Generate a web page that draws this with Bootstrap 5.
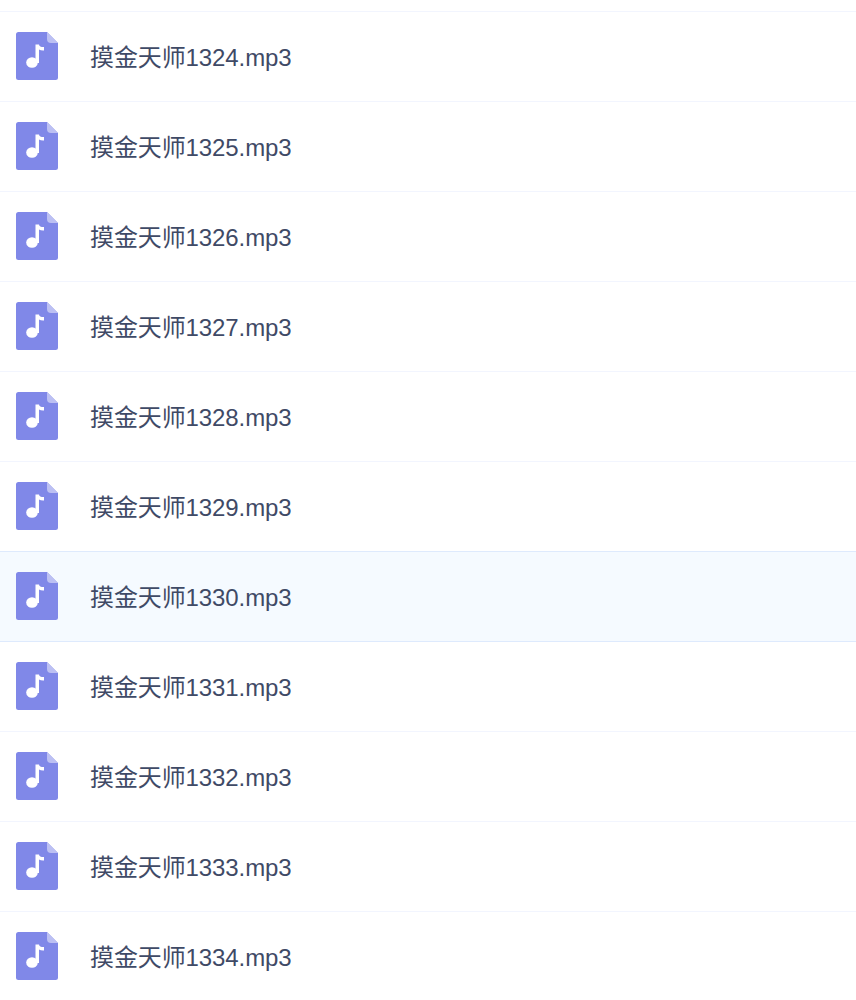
<!DOCTYPE html>
<html lang="zh">
<head>
    <meta charset="UTF-8">
    <meta name="viewport" content="width=device-width, initial-scale=1.0">
    <title>音频列表</title>
    <link href="https://cdn.jsdelivr.net/npm/bootstrap@5.3.0/dist/css/bootstrap.min.css" rel="stylesheet">
    <style>
        body {
            background-color: #fff;
            height: 1000px;
            overflow: hidden;
            padding-top: 11px;
        }
        .list-group-flush > .file-row.file-row {
            height: 90px;
            border-width: 1px 0 0;
            border-style: solid;
            border-color: #f2f5fe;
            padding: 0 0 0 16px;
            gap: 32px;
            border-radius: 0;
        }
        .list-group-flush > .file-row.active-row {
            background-color: #f5faff;
            border-top-color: #deeafd;
        }
        .list-group-flush > .active-row + .file-row.file-row {
            border-top-color: #deeafd;
        }
        .file-icon {
            width: 42px;
            height: 48px;
            flex: none;
            margin-top: -1px;
        }
        .file-name {
            font-family: "Liberation Sans", "Noto Sans CJK SC", sans-serif;
            font-size: 24px;
            color: #3f4a66;
            line-height: 1;
            letter-spacing: -0.1px;
            margin-top: 3px;
        }
    </style>
</head>
<body>
    <svg width="0" height="0" class="position-absolute">
        <symbol id="musicFile" viewBox="0 0 42 48">
            <path d="M2.500 0H31L42 11V45.500a2.500 2.500 0 0 1-2.500 2.500H2.500a2.500 2.500 0 0 1-2.500-2.500V2.500a2.500 2.500 0 0 1 2.500-2.500Z" fill="#8088e8"/>
            <path d="M31 0L42 11H35a4 4 0 0 1-4-4Z" fill="#bcc0f3"/>
            <ellipse cx="16" cy="30.500" rx="5.800" ry="5.300" fill="#fff"/>
            <path d="M19.500 12.500h3.500c.3 1.800 2 2.700 5 2.600v3.400c-2 .2-3.700-.2-5-1V31h-3.500Z" fill="#fff"/>
        </symbol>
    </svg>

    <div class="list-group list-group-flush">
        <div class="list-group-item file-row d-flex align-items-center"><svg class="file-icon"><use href="#musicFile"/></svg><span class="file-name">摸金天师1324.mp3</span></div>
        <div class="list-group-item file-row d-flex align-items-center"><svg class="file-icon"><use href="#musicFile"/></svg><span class="file-name">摸金天师1325.mp3</span></div>
        <div class="list-group-item file-row d-flex align-items-center"><svg class="file-icon"><use href="#musicFile"/></svg><span class="file-name">摸金天师1326.mp3</span></div>
        <div class="list-group-item file-row d-flex align-items-center"><svg class="file-icon"><use href="#musicFile"/></svg><span class="file-name">摸金天师1327.mp3</span></div>
        <div class="list-group-item file-row d-flex align-items-center"><svg class="file-icon"><use href="#musicFile"/></svg><span class="file-name">摸金天师1328.mp3</span></div>
        <div class="list-group-item file-row d-flex align-items-center"><svg class="file-icon"><use href="#musicFile"/></svg><span class="file-name">摸金天师1329.mp3</span></div>
        <div class="list-group-item file-row active-row d-flex align-items-center"><svg class="file-icon"><use href="#musicFile"/></svg><span class="file-name">摸金天师1330.mp3</span></div>
        <div class="list-group-item file-row d-flex align-items-center"><svg class="file-icon"><use href="#musicFile"/></svg><span class="file-name">摸金天师1331.mp3</span></div>
        <div class="list-group-item file-row d-flex align-items-center"><svg class="file-icon"><use href="#musicFile"/></svg><span class="file-name">摸金天师1332.mp3</span></div>
        <div class="list-group-item file-row d-flex align-items-center"><svg class="file-icon"><use href="#musicFile"/></svg><span class="file-name">摸金天师1333.mp3</span></div>
        <div class="list-group-item file-row d-flex align-items-center"><svg class="file-icon"><use href="#musicFile"/></svg><span class="file-name">摸金天师1334.mp3</span></div>
    </div>

    <script src="https://cdn.jsdelivr.net/npm/bootstrap@5.3.0/dist/js/bootstrap.bundle.min.js"></script>
</body>
</html>
